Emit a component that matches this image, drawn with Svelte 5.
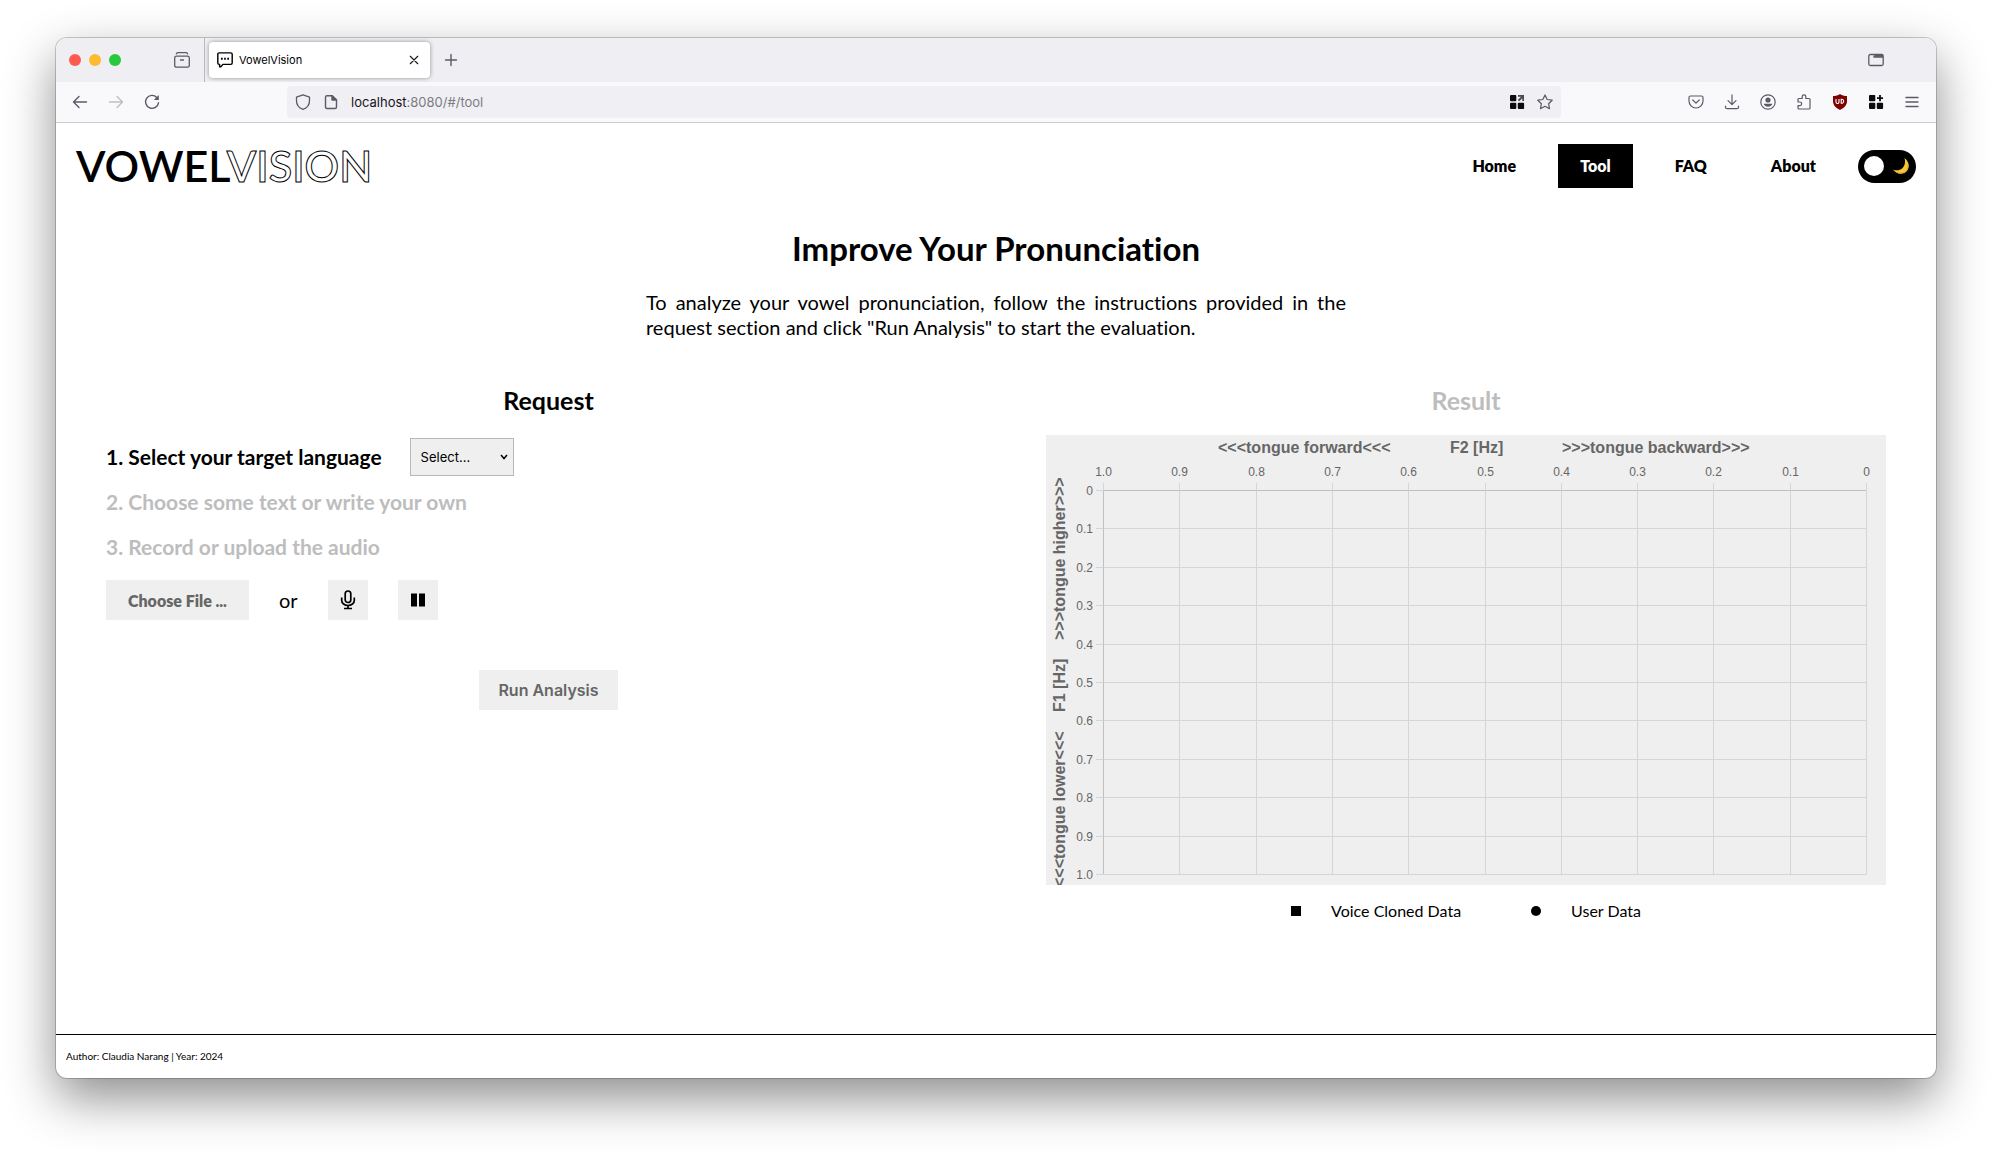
<script>
  let language = $state('');
  let dark = $state(false);

  const nav = [
    { label: 'Home', href: '#/' },
    { label: 'Tool', href: '#/tool', active: true },
    { label: 'FAQ', href: '#/faq' },
    { label: 'About', href: '#/about' }
  ];

  // Plot area inside the 840 x 450 chart
  const plot = { left: 57, top: 55, width: 763, height: 384 };
  const steps = Array.from({ length: 11 }, (_, i) => i);
  const ticks = steps.map((i) => ({
    x: Math.round(plot.left + (plot.width * i) / 10) + 0.5,
    y: Math.round(plot.top + (plot.height * i) / 10) + 0.5,
    xLabel: i === 10 ? '0' : (1 - i / 10).toFixed(1),
    yLabel: i === 0 ? '0' : (i / 10).toFixed(1)
  }));
</script>

<div class="desktop">
  <div class="window">
    <div class="tabbar">
      <div class="lights">
        <span class="light red"></span>
        <span class="light yellow"></span>
        <span class="light green"></span>
      </div>
      <button class="icon view" aria-label="Firefox View">
        <svg viewBox="0 0 16 16" fill="none" stroke="currentColor" stroke-width="1.3" stroke-linecap="round">
          <rect x="0.7" y="4.2" width="14.6" height="11" rx="1.8" />
          <path d="M2.4 1.8C2.8 1 3.2.7 4 .7h8c.8 0 1.2.3 1.6 1.1M6.5 8h3" />
        </svg>
      </button>
      <div class="tab">
        <svg class="favicon" viewBox="0 0 16 16" fill="none" stroke="#000" stroke-width="1.4" stroke-linejoin="round">
          <path d="M2.2.9h11.6c.8 0 1.4.6 1.4 1.4v8.7c0 .8-.6 1.4-1.4 1.4H6L3.8 14.8H2.6v-2.4H2.2C1.4 12.4.8 11.8.8 11V2.3C.8 1.5 1.4.9 2.2.9z" />
          <path d="M4 6.700h1.700M7.150 6.700h1.700M10.300 6.700H12" stroke-width="2" />
        </svg>
        <span class="tabtitle">VowelVision</span>
        <button class="icon small" aria-label="Close tab">
          <svg viewBox="0 0 16 16" fill="none" stroke="#15141a" stroke-width="1.5" stroke-linecap="round"><path d="M3 3l10 10M13 3L3 13" /></svg>
        </button>
      </div>
      <button class="icon newtab" aria-label="New tab">
        <svg viewBox="0 0 16 16" fill="none" stroke="currentColor" stroke-width="1.4" stroke-linecap="round"><path d="M8 2.500v11M2.500 8h11" /></svg>
      </button>
      <button class="icon list" aria-label="List all tabs">
        <svg viewBox="0 0 16 16" fill="none" stroke="currentColor" stroke-width="1.3">
          <rect x="0.8" y="2.5" width="14.4" height="11" rx="1.5" />
          <path d="M6 3.500V5h9" /><path d="M6.500 3.800H15" stroke-width="2.2" />
        </svg>
      </button>
    </div>

    <div class="toolbar">
      <div class="history">
        <button class="icon" aria-label="Back">
          <svg viewBox="0 0 16 16" fill="none" stroke="currentColor" stroke-width="1.4" stroke-linecap="round" stroke-linejoin="round"><path d="M14.500 8H1.500M7 2.500L1.500 8 7 13.500" /></svg>
        </button>
        <button class="icon faded" aria-label="Forward">
          <svg viewBox="0 0 16 16" fill="none" stroke="currentColor" stroke-width="1.4" stroke-linecap="round" stroke-linejoin="round"><path d="M1.500 8h13M9 2.500L14.500 8 9 13.500" /></svg>
        </button>
        <button class="icon" aria-label="Reload">
          <svg viewBox="0 0 16 16" fill="none" stroke="currentColor" stroke-width="1.4" stroke-linecap="round"><path d="M12.800 3.400A6.500 6.500 0 1 0 14.500 8.800" /><path d="M14.800 1v5H9.800z" fill="currentColor" stroke="none" /></svg>
        </button>
      </div>
      <div class="urlbar">
        <svg class="glyph" viewBox="0 0 16 16" fill="none" stroke="currentColor" stroke-width="1.3" stroke-linejoin="round"><path d="M8 .8l6.500 2.400v3.600c0 3.700-2.500 7.200-6.500 8.500C4 14 1.500 10.500 1.500 6.800V3.200z" /></svg>
        <svg class="glyph" viewBox="0 0 16 16" fill="none" stroke="currentColor" stroke-width="1.4" stroke-linejoin="round"><path d="M4 1.700h5.200l4.300 4.300v7a1.500 1.500 0 0 1-1.500 1.500H4A1.500 1.500 0 0 1 2.500 13V3.200A1.500 1.500 0 0 1 4 1.700z" /><path d="M9 1.700V6h4.500z" fill="currentColor" /></svg>
        <span class="url"><b>localhost</b>:8080/#/tool</span>
        <button class="icon dark" aria-label="Open containers">
          <svg viewBox="0 0 16 16" fill="currentColor"><rect x="1" y="1" width="6.3" height="6.3" rx="1" /><rect x="1" y="8.8" width="6.3" height="6.3" rx="1" /><rect x="8.8" y="8.8" width="6.3" height="6.3" rx="1" /><path d="M9 1h6v6h-1.700V4.200L10.200 7.300 8.800 5.900l3.100-3.200H9z" fill="#4a4a50" /></svg>
        </button>
        <button class="icon" aria-label="Bookmark">
          <svg viewBox="0 0 16 16" fill="none" stroke="currentColor" stroke-width="1.2" stroke-linejoin="round"><path d="M8 .9l2.200 4.600 5 .7-3.600 3.500.9 5L8 12.300l-4.500 2.400.9-5L.8 6.200l5-.7z" /></svg>
        </button>
      </div>
      <div class="actions">
        <button class="icon" aria-label="Pocket">
          <svg viewBox="0 0 16 16" fill="none" stroke="currentColor" stroke-width="1.2" stroke-linecap="round" stroke-linejoin="round"><path d="M2.500 2h11a1.500 1.500 0 0 1 1.500 1.500V7A7 7 0 0 1 1 7V3.500A1.500 1.500 0 0 1 2.500 2zM4.800 6L8 9.200 11.200 6" /></svg>
        </button>
        <button class="icon" aria-label="Downloads">
          <svg viewBox="0 0 16 16" fill="none" stroke="currentColor" stroke-width="1.2" stroke-linecap="round" stroke-linejoin="round"><path d="M8 .8v9.700M4 6.700l4 4 4-4M1.500 12v1.200c0 .8.700 1.500 1.500 1.500h10c.8 0 1.500-.7 1.500-1.500V12" /></svg>
        </button>
        <button class="icon" aria-label="Account">
          <svg viewBox="0 0 16 16" fill="none" stroke="currentColor" stroke-width="1.2"><circle cx="8" cy="8" r="7.2" /><circle cx="8" cy="6" r="2.6" fill="currentColor" stroke="none" /><path d="M3.600 9.800h8.800c-.6 1.800-2.300 3-4.400 3s-3.800-1.200-4.400-3z" fill="currentColor" stroke="none" /></svg>
        </button>
        <button class="icon" aria-label="Extensions">
          <svg viewBox="0 0 16 16" fill="none" stroke="currentColor" stroke-width="1.2" stroke-linejoin="round"><path d="M2 8V5.500A1 1 0 0 1 3 4.500h3.200V2.600a1.800 1.800 0 0 1 3.600 0v1.900H13a1 1 0 0 1 1 1V14a1 1 0 0 1-1 1H3a1 1 0 0 1-1-1v-2.300h1.800a1.800 1.800 0 0 0 0-3.700z" /></svg>
        </button>
        <button class="icon" aria-label="uBlock Origin">
          <svg viewBox="0 0 16 16"><path d="M8 0c2 1.400 4.300 2 7 2v5c0 4.200-2.500 6.600-7 9-4.500-2.400-7-4.800-7-9V2c2.700 0 5-.6 7-2z" fill="#800000" /><path d="M4 5v3a1.500 1.500 0 0 0 3 0V5M9.200 5.300v3.900a2 2 0 1 0 0-3.900z" fill="none" stroke="#fff" stroke-width="1.1" /></svg>
        </button>
        <button class="icon dark" aria-label="Add container">
          <svg viewBox="0 0 16 16" fill="currentColor"><rect x="1" y="1" width="6.3" height="6.3" rx="1" /><rect x="1" y="8.8" width="6.3" height="6.3" rx="1" /><rect x="8.8" y="8.8" width="6.3" height="6.3" rx="1" /><path d="M11.100 1h1.800v2.200H15V5h-2.100v2.200h-1.800V5H9V3.200h2.100z" /></svg>
        </button>
        <button class="icon" aria-label="Menu">
          <svg viewBox="0 0 16 16" fill="none" stroke="currentColor" stroke-width="1.4" stroke-linecap="round"><path d="M2 3.500h12M2 8h12M2 12.500h12" /></svg>
        </button>
      </div>
    </div>

    <div class="page">
      <header>
        <a class="logo" href="#/">VOWEL<span>VISION</span></a>
        <nav>
          {#each nav as item}
            <a href={item.href} class:active={item.active}>{item.label}</a>
          {/each}
          <label class="theme">
            <input type="checkbox" aria-label="Dark mode" bind:checked={dark} />
            <svg viewBox="0 0 18 18"><path d="M12.500 1C17.500 5 18 11 14.500 14.500 11 18 4.500 17.500.8 12.500 5 14.300 9 13 11 10.500 13.200 8 13.500 4.500 12.500 1z" fill="#f5c83a" /><path d="M16 7.500c.3 3-1 6-3.500 7.500-2 1.300-5 1.500-7.500.4" fill="none" stroke="#e0a828" stroke-width="1" /></svg>
          </label>
        </nav>
      </header>

      <main>
        <section class="intro">
          <h1>Improve Your Pronunciation</h1>
          <p>To analyze your vowel pronunciation, follow the instructions provided in the request section and click "Run Analysis" to start the evaluation.</p>
        </section>

        <div class="columns">
          <section class="request">
            <h2>Request</h2>
            <div class="step">
              <label for="language">1. Select your target language</label>
              <div class="picker">
                <select id="language" bind:value={language}>
                  <option value="">Select...</option>
                  <option value="de">German</option>
                  <option value="en">English</option>
                </select>
                <svg viewBox="0 0 8 6" fill="none" stroke="#000" stroke-width="1.5"><path d="M1 1l3 3.500L7 1" /></svg>
              </div>
            </div>
            <div class="step off">2. Choose some text or write your own</div>
            <div class="step off">3. Record or upload the audio</div>
            <div class="audio">
              <button class="btn" disabled>Choose File ...</button>
              <span>or</span>
              <button class="btn square" aria-label="Record">
                <svg viewBox="0 0 20 20" fill="none" stroke="#000" stroke-width="1.7"><rect x="7.2" y="1" width="5.6" height="11.5" rx="2.8" /><path d="M3.700 7.500V10.500a6.300 5 0 0 0 12.600 0V7.500M10 15.500v3M6 18.500h8" /></svg>
              </button>
              <button class="btn square" aria-label="Pause">
                <svg viewBox="0 0 20 20" fill="#000"><rect x="3" y="3.500" width="6" height="13" /><rect x="11" y="3.500" width="6" height="13" /></svg>
              </button>
            </div>
            <button class="btn run" disabled>Run Analysis</button>
          </section>

          <section class="result">
            <h2 class="off">Result</h2>
            <svg class="chart" viewBox="0 0 840 450" role="img" aria-label="Vowel formant chart">
              {#each ticks as t, i}
                <path class:axis={i === 0} d="M{t.x} 55.5V439.5" />
                <path class:axis={i === 0} d="M57.5 {t.y}H820.5" />
                <path d="M{t.x} 48V55M50 {t.y}H57" />
                <text x={t.x} y="41" text-anchor="middle">{t.xLabel}</text>
                <text x="47" y={t.y + 4} text-anchor="end">{t.yLabel}</text>
              {/each}
              <g class="title">
                <text x="172" y="18">&lt;&lt;&lt;tongue forward&lt;&lt;&lt;</text>
                <text x="404" y="18">F2 [Hz]</text>
                <text x="516" y="18">&gt;&gt;&gt;tongue backward&gt;&gt;&gt;</text>
                <g transform="rotate(-90)">
                  <text x="-452" y="19">&lt;&lt;&lt;tongue lower&lt;&lt;&lt;</text>
                  <text x="-277" y="19">F1 [Hz]</text>
                  <text x="-205" y="19">&gt;&gt;&gt;tongue higher&gt;&gt;&gt;</text>
                </g>
              </g>
            </svg>
            <ul class="legend">
              <li><span class="mark"></span>Voice Cloned Data</li>
              <li><span class="mark round"></span>User Data</li>
            </ul>
          </section>
        </div>
      </main>

      <footer>Author: Claudia Narang | Year: 2024</footer>
    </div>
  </div>
</div>

<style>
  :global(body) {
    margin: 0;
    background: #fff;
  }
  * {
    box-sizing: border-box;
  }
  .desktop {
    min-height: 100vh;
    padding: 38px 56px 74px;
    display: flex;
    overflow: hidden;
    font-family: Lato, sans-serif;
    font-variant-ligatures: none;
    color: #000;
  }
  .window {
    flex: 1;
    min-width: 0;
    display: flex;
    flex-direction: column;
    background: #fff;
    border-radius: 11px;
    box-shadow: 0 0 0 1px rgba(0, 0, 0, 0.2), 0 20px 50px rgba(0, 0, 0, 0.45);
  }
  button {
    font: inherit;
    border: 0;
    padding: 0;
    background: none;
    color: inherit;
  }
  svg {
    display: block;
  }
  .icon {
    width: 16px;
    height: 16px;
    flex: none;
    color: #5b5b66;
  }
  .icon.small {
    width: 12px;
    height: 12px;
  }
  .icon.faded {
    color: #bdbdc3;
  }
  .icon.dark {
    color: #0c0c0d;
  }

  .tabbar {
    height: 44px;
    display: flex;
    align-items: center;
    background: #efeef3;
    border-radius: 11px 11px 0 0;
    font-family: Inter, sans-serif;
  }
  .lights {
    display: flex;
    gap: 8px;
    padding-left: 13px;
  }
  .light {
    width: 12px;
    height: 12px;
    border-radius: 50%;
  }
  .red { background: #ff5a52; }
  .yellow { background: #febb2e; }
  .green { background: #28c83f; }
  .view {
    margin: 0 14px 0 53px;
  }
  .tab {
    position: relative;
    width: 221px;
    height: 36px;
    display: flex;
    align-items: center;
    gap: 6px;
    padding: 0 10px 0 8px;
    border-radius: 4px;
    background: #fff;
    box-shadow: 0 0 4px rgba(0, 0, 0, 0.4);
    margin-left: 5px;
    font-size: 11px;
  }
  .tab::before {
    content: '';
    position: absolute;
    left: -5px;
    top: -4px;
    width: 1px;
    height: 44px;
    background: #b8b8be;
  }
  .favicon {
    width: 16px;
    height: 16px;
  }
  .tabtitle {
    flex: 1;
  }
  .newtab {
    margin-left: 13px;
  }
  .list {
    margin: 0 52px 0 auto;
  }

  .toolbar {
    height: 41px;
    display: flex;
    align-items: center;
    background: #f9f9fb;
    border-bottom: 1px solid #ccc;
  }
  .history {
    width: 231px;
    padding-left: 16px;
    display: flex;
    gap: 20px;
  }
  .urlbar {
    flex: 1;
    height: 32px;
    display: flex;
    align-items: center;
    gap: 12px;
    padding: 0 8px;
    border-radius: 4px;
    background: #f0eff4;
    font: 13px Inter, sans-serif;
    color: #5b5b66;
  }
  .glyph {
    width: 16px;
    height: 16px;
  }
  .url {
    flex: 1;
    color: #7c7b82;
  }
  .url b {
    font-weight: 400;
    color: #15141a;
  }
  .actions {
    width: 375px;
    padding-right: 16px;
    display: flex;
    justify-content: flex-end;
    gap: 20px;
  }

  .page {
    flex: 1;
    display: flex;
    flex-direction: column;
  }
  header {
    display: flex;
    justify-content: space-between;
    align-items: center;
    padding: 17px 20px 0;
  }
  .logo {
    font-size: 43px;
    line-height: 52px;
    font-weight: 600;
    color: #000;
    text-decoration: none;
  }
  .logo span {
    color: #fff;
    -webkit-text-stroke: 1px #000;
  }
  nav {
    display: flex;
    align-items: center;
    gap: 20px;
  }
  nav a {
    padding: 0 22px;
    font-size: 16px;
    line-height: 44px;
    font-weight: 800;
    color: #000;
    text-decoration: none;
  }
  nav a.active {
    background: #000;
    color: #fff;
  }
  .theme {
    width: 58px;
    height: 33px;
    display: flex;
    align-items: center;
    justify-content: space-between;
    padding: 0 6px;
    border-radius: 17px;
    background: #000;
  }
  .theme input {
    appearance: none;
    width: 20px;
    height: 20px;
    margin: 0;
    border-radius: 50%;
    background: #fff;
  }
  .theme svg {
    width: 18px;
    height: 18px;
  }

  main {
    flex: 1;
  }
  .intro {
    width: 700px;
    margin: 0 auto;
    padding-top: 36px;
  }
  h1 {
    margin: 0 0 22px;
    font-size: 33px;
    line-height: 40px;
    font-weight: 700;
    text-align: center;
  }
  .intro p {
    margin: 0;
    font-size: 20px;
    line-height: 25px;
    text-align: justify;
  }
  .columns {
    display: grid;
    grid-template-columns: 1fr 1fr;
    padding-top: 44px;
  }
  .request {
    padding: 0 5px 0 50px;
  }
  .result {
    padding: 0 50px;
  }
  h2 {
    margin: 0;
    font-size: 25px;
    line-height: 32px;
    font-weight: 700;
    text-align: center;
  }
  .off {
    color: #bdbdbd;
  }
  .request h2 {
    margin-bottom: 18px;
  }
  .result h2 {
    margin-bottom: 19px;
  }
  .step {
    display: flex;
    align-items: center;
    gap: 28px;
    height: 45px;
    font-size: 21px;
    font-weight: 700;
  }
  .picker {
    display: grid;
    align-items: center;
  }
  .picker select,
  .picker svg {
    grid-area: 1 / 1;
  }
  .picker svg {
    width: 8px;
    height: 6px;
    justify-self: end;
    margin-right: 6px;
    pointer-events: none;
  }
  select {
    appearance: none;
    width: 104px;
    height: 38px;
    padding: 0 10px;
    border: 1px solid #b8b8b8;
    border-radius: 0;
    background: #efefef;
    color: #000;
    font: 13px Inter, sans-serif;
  }
  .audio {
    display: flex;
    align-items: center;
    gap: 30px;
    margin: 11px 0 50px;
    font-size: 20px;
  }
  .btn {
    height: 40px;
    padding: 0 22px;
    background: #efefef;
    color: #666;
    font-size: 16px;
    font-weight: 800;
  }
  .btn.square {
    width: 40px;
    padding: 10px;
  }
  .btn.run {
    display: block;
    margin: 0 auto;
    padding: 0 19px;
    font-family: Inter, sans-serif;
    font-weight: 600;
  }
  .chart {
    width: 100%;
    background: #efefef;
  }
  .chart path {
    stroke: #d5d5d5;
    fill: none;
  }
  .chart path.axis {
    stroke: #bfbfbf;
  }
  .chart text {
    font: 12px 'Liberation Sans', sans-serif;
    fill: #666;
  }
  .chart .title text {
    font-size: 16px;
    font-weight: 700;
  }
  .legend {
    display: flex;
    justify-content: center;
    gap: 70px;
    list-style: none;
    margin: 0;
    padding: 16px 0 0;
    font-size: 16px;
    line-height: 20px;
  }
  .legend li {
    display: flex;
    align-items: center;
    gap: 30px;
  }
  .mark {
    width: 10px;
    height: 10px;
    background: #000;
  }
  .mark.round {
    border-radius: 50%;
  }
  footer {
    border-top: 1px solid #000;
    padding: 0 10px;
    font-size: 10px;
    line-height: 43px;
  }
</style>
